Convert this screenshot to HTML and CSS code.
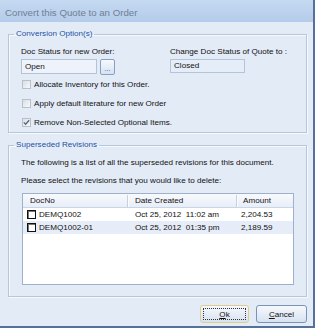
FILE: index.html
```html
<!DOCTYPE html>
<html>
<head>
    <meta charset="utf-8" />
    <title>Convert this Quote to an Order</title>
    <link rel="stylesheet" href="styles.css">
</head>
<body>
    <div class="dialog">
        <div class="titlebar">Convert this Quote to an Order</div>
        <div class="dialog-body">
            <fieldset class="group">
                <legend>Conversion Option(s)</legend>
                <div class="group-body">
                    <div class="status-row">
                        <div class="status-col">
                            <div class="field-label">Doc Status for new Order:</div>
                            <div class="field-line">
                                <div class="textbox open-box">Open</div>
                                <button class="browse">...</button>
                            </div>
                        </div>
                        <div class="status-col">
                            <div class="field-label">Change Doc Status of Quote to :</div>
                            <div class="textbox closed-box">Closed</div>
                        </div>
                    </div>
                    <div class="check-row"><span class="check"></span>Allocate Inventory for this Order.</div>
                    <div class="check-row"><span class="check"></span>Apply default literature for new Order</div>
                    <div class="check-row">
                        <span class="check">
                            <svg width="7" height="7" viewBox="0 0 7 7"><polyline points="0.8,3.4 2.6,5.3 6.2,1.2" fill="none" stroke="#5b6578" stroke-width="1.3" /></svg>
                        </span>Remove Non-Selected Optional Items.
                    </div>
                </div>
            </fieldset>

            <fieldset class="group revisions">
                <legend>Superseded Revisions</legend>
                <div class="group-body">
                    <p>The following is a list of all the superseded revisions for this document.</p>
                    <p>Please select the revisions that you would like to delete:</p>
                    <div class="list">
                        <div class="list-head">
                            <div class="col-doc">DocNo</div>
                            <div class="col-date">Date Created</div>
                            <div class="col-amount">Amount</div>
                        </div>
                        <div class="list-row">
                            <div class="col-doc"><span class="row-check"></span>DEMQ1002</div>
                            <div class="col-date">Oct 25, 2012  11:02 am</div>
                            <div class="col-amount">2,204.53</div>
                        </div>
                        <div class="list-row alt">
                            <div class="col-doc"><span class="row-check"></span>DEMQ1002-01</div>
                            <div class="col-date">Oct 25, 2012  01:35 pm</div>
                            <div class="col-amount">2,189.59</div>
                        </div>
                    </div>
                </div>
            </fieldset>

            <div class="buttons">
                <button class="btn btn-ok"><span><u>O</u>k</span></button>
                <button class="btn btn-cancel"><u>C</u>ancel</button>
            </div>
        </div>
    </div>
</body>
</html>
```

FILE: styles.css
```css
body {
    margin: 0;
    font-family: 'Liberation Sans', Arial, sans-serif;
    font-size: 8.1px;
    color: #111;
}

.dialog {
    width: 315px;
    height: 328px;
    box-sizing: border-box;
    background-color: #e3ebf7;
    border-right: 2px solid #55709a;
    border-bottom: 2px solid #55709a;
    display: flex;
    flex-direction: column;
}

.titlebar {
    height: 22px;
    box-sizing: border-box;
    padding: 6px 0 0 5px;
    line-height: 14px;
    font-size: 9.7px;
    color: #6f7f94;
    background: linear-gradient(#c5d9f1, #b4cbea);
}

.dialog-body {
    padding: 6px 6px 0 8px;
}

.group {
    margin: 0;
    padding: 0;
    border: 1px solid #b7c6d9;
    box-shadow: 1px 1px 0 #f6f9fe, inset 1px 1px 0 #f6f9fe;
}

.group legend {
    margin-left: 5px;
    padding: 0 2px;
    line-height: 12px;
    color: #1d50a2;
}

.group-body {
    padding: 6px 12px 0 12px;
}

.revisions {
    margin-top: 6px;
}

.revisions .group-body {
    padding-bottom: 11px;
}

/* doc status fields */
.status-row {
    display: grid;
    grid-template-columns: 149px auto;
}

.field-label {
    line-height: 12px;
    margin-bottom: 1px;
}

.field-line {
    display: flex;
    gap: 3px;
}

.textbox {
    box-sizing: border-box;
    height: 15px;
    line-height: 13px;
    padding-left: 3px;
    border: 1px solid #b3c3d8;
    background-color: #eef3fb;
}

.open-box {
    width: 76px;
}

.closed-box {
    width: 75px;
    height: 14px;
    line-height: 12px;
    margin-top: 1px;
    background-color: #e5edf8;
}

.browse {
    width: 15px;
    height: 16px;
    padding: 0;
    border: 1px solid #86a0c6;
    border-radius: 2px;
    background: linear-gradient(#f6f9fd, #d6e2f1);
    font-family: inherit;
    font-size: 7px;
    line-height: 18px;
    color: #2c4a7a;
}

/* option check boxes */
.check-row {
    display: flex;
    align-items: center;
    height: 19px;
    line-height: 12px;
}

.check-row:first-of-type {
    margin-top: 1px;
}

.check {
    box-sizing: border-box;
    width: 9px;
    height: 9px;
    margin: 0 3px 0 1px;
    border: 1px solid #b8c0ca;
    background: linear-gradient(135deg, #dadfe5, #f7f8fa);
    display: flex;
    align-items: center;
    justify-content: center;
}

/* revisions list */
.revisions p {
    margin: 0 0 6px 0;
    line-height: 12px;
}

.list {
    margin: 3px 0 0 1px;
    width: 272px;
    height: 92px;
    box-sizing: border-box;
    border: 1px solid #9db1cb;
    background-color: white;
}

.list-head,
.list-row {
    display: grid;
    grid-template-columns: 104px 109px auto;
    line-height: 12px;
}

.list-head {
    height: 14px;
    box-sizing: border-box;
    padding-top: 1px;
    border-bottom: 1px solid #c9d6e6;
    background: linear-gradient(#f8fafd, #e8eef8);
}

.list-head > div {
    padding-left: 7px;
}

.list-head .col-date,
.list-head .col-amount {
    border-left: 1px solid #c7d1de;
    box-shadow: inset 1px 0 0 #fbfcfe;
}

.list-head .col-amount {
    padding-left: 6px;
}

.list-row {
    height: 13px;
    align-items: center;
}

.list-row.alt {
    background-color: #e6edf8;
}

.list-row .col-doc {
    display: flex;
    align-items: center;
    padding-left: 4px;
}

.list-row .col-date {
    padding-left: 8px;
    white-space: pre;
}

.list-row .col-amount {
    padding-left: 5px;
}

.row-check {
    box-sizing: border-box;
    width: 9px;
    height: 9px;
    margin-right: 3px;
    border: 1px solid #111;
    box-shadow: inset 1px 1px 0 #777;
    background-color: white;
}

/* dialog buttons */
.buttons {
    display: flex;
    justify-content: flex-end;
    gap: 7px;
    margin-top: 8px;
}

.btn {
    height: 18px;
    padding: 0;
    border: 1px solid #7a93b7;
    border-radius: 3px;
    background: linear-gradient(#f6f9fd, #d7e2f0);
    font-family: inherit;
    font-size: 8.1px;
    color: #111;
}

.btn-ok {
    width: 49px;
    padding: 2px;
    border-color: #e0cd8e;
}

.btn-ok span {
    display: block;
    height: 100%;
    box-sizing: border-box;
    line-height: 12px;
    border: 1px dotted #333;
}

.btn-cancel {
    width: 51px;
}
```
